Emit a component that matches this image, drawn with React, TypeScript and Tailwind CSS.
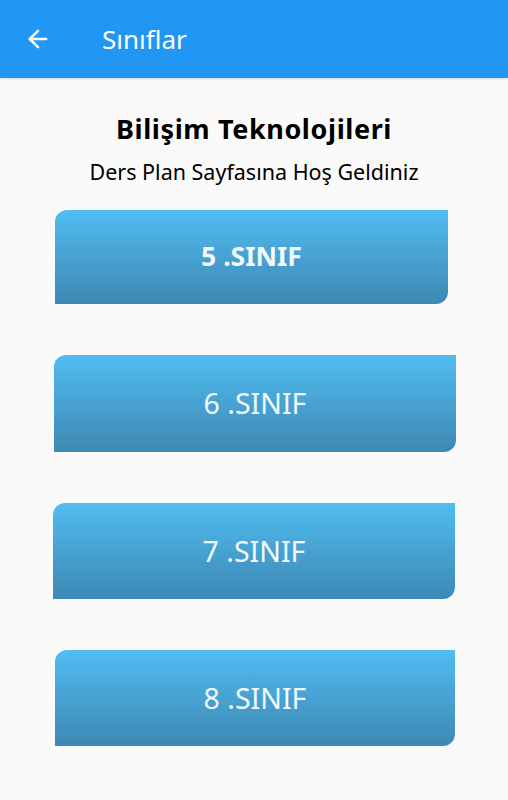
import React from 'react';
import { ArrowLeft } from 'lucide-react';

const App = () => {
  return (
    <div
      className="flex flex-col w-[508px] h-[800px] bg-[#fafafa] overflow-hidden"
      style={{ fontFamily: '"Noto Sans", "DejaVu Sans", sans-serif' }}
    >
      {/* App bar */}
      <div className="flex items-center h-[78px] bg-[#2196f3] shadow-sm text-white shrink-0">
        <button className="ml-[24px] p-0">
          <ArrowLeft size={28} strokeWidth={2.2} />
        </button>
        <h1 className="ml-[50px] text-[26px] leading-none">Sınıflar</h1>
      </div>

      {/* Heading */}
      <div className="flex flex-col items-center pt-[34px] text-black">
        <h2 className="text-[27px] font-bold leading-[34px] tracking-[0.6px]">Bilişim Teknolojileri</h2>
        <p className="mt-[11px] text-[21.5px] leading-[30px]">Ders Plan Sayfasına Hoş Geldiniz</p>
      </div>

      {/* Class buttons */}
      <div className="flex flex-col">
        <button className="mt-[23px] ml-[55px] w-[393px] h-[94px] rounded-tl-[12px] rounded-br-[12px] bg-gradient-to-b from-[#50bdf2] to-[#3e88b3] text-[#f2f9fd] text-[26.5px] font-bold">
          5 .SINIF
        </button>
        <button className="mt-[51px] ml-[54px] w-[402px] h-[97px] rounded-tl-[12px] rounded-br-[12px] bg-gradient-to-b from-[#50bdf2] to-[#3e88b3] text-[#f2f9fd] text-[28.5px]">
          6 .SINIF
        </button>
        <button className="mt-[51px] ml-[53px] w-[402px] h-[96px] rounded-tl-[12px] rounded-br-[12px] bg-gradient-to-b from-[#50bdf2] to-[#3e88b3] text-[#f2f9fd] text-[28.5px]">
          7 .SINIF
        </button>
        <button className="mt-[51px] ml-[55px] w-[400px] h-[96px] rounded-tl-[12px] rounded-br-[12px] bg-gradient-to-b from-[#50bdf2] to-[#3e88b3] text-[#f2f9fd] text-[28.5px]">
          8 .SINIF
        </button>
      </div>
    </div>
  );
};

export default App;
